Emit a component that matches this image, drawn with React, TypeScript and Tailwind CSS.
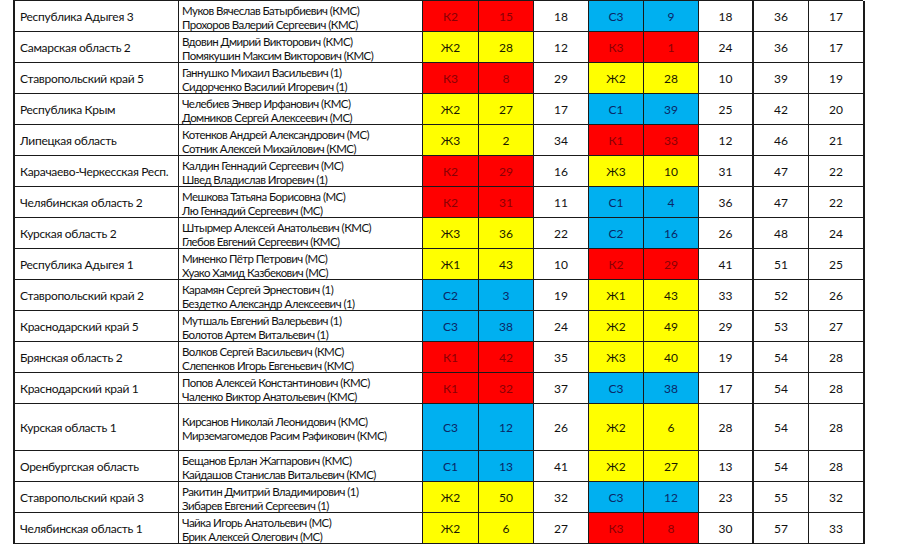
type Tone = "red" | "yellow" | "blue";

type Row = {
  region: string;
  names: [string, string];
  a: [string, string, Tone];
  aPlace: string;
  b: [string, string, Tone];
  bPlace: string;
  sum: string;
  rank: string;
  tall?: boolean;
};

const ROWS: Row[] = [
  { region: "Республика Адыгея 3", names: ["Муков Вячеслав Батырбиевич (КМС)", "Прохоров Валерий Сергеевич (КМС)"], a: ["К2", "15", "red"], aPlace: "18", b: ["С3", "9", "blue"], bPlace: "18", sum: "36", rank: "17" },
  { region: "Самарская область 2", names: ["Вдовин Дмирий Викторович (КМС)", "Помякушин Максим Викторович (КМС)"], a: ["Ж2", "28", "yellow"], aPlace: "12", b: ["К3", "1", "red"], bPlace: "24", sum: "36", rank: "17" },
  { region: "Ставропольский край 5", names: ["Ганнушко Михаил Васильевич (1)", "Сидорченко Василий Игоревич (1)"], a: ["К3", "8", "red"], aPlace: "29", b: ["Ж2", "28", "yellow"], bPlace: "10", sum: "39", rank: "19" },
  { region: "Республика Крым", names: ["Челебиев Энвер Ирфанович (КМС)", "Домников Сергей Алексеевич (МС)"], a: ["Ж2", "27", "yellow"], aPlace: "17", b: ["С1", "39", "blue"], bPlace: "25", sum: "42", rank: "20" },
  { region: "Липецкая область", names: ["Котенков Андрей Александрович (МС)", "Сотник Алексей Михайлович (КМС)"], a: ["Ж3", "2", "yellow"], aPlace: "34", b: ["К1", "33", "red"], bPlace: "12", sum: "46", rank: "21" },
  { region: "Карачаево-Черкесская Респ.", names: ["Калдин Геннадий Сергеевич (МС)", "Швед Владислав Игоревич (1)"], a: ["К2", "29", "red"], aPlace: "16", b: ["Ж3", "10", "yellow"], bPlace: "31", sum: "47", rank: "22" },
  { region: "Челябинская область 2", names: ["Мешкова Татьяна Борисовна (МС)", "Лю Геннадий Сергеевич (МС)"], a: ["К2", "31", "red"], aPlace: "11", b: ["С1", "4", "blue"], bPlace: "36", sum: "47", rank: "22" },
  { region: "Курская область 2", names: ["Штырмер Алексей Анатольевич (КМС)", "Глебов Евгений Сергеевич (КМС)"], a: ["Ж3", "36", "yellow"], aPlace: "22", b: ["С2", "16", "blue"], bPlace: "26", sum: "48", rank: "24" },
  { region: "Республика Адыгея 1", names: ["Миненко Пётр Петрович (МС)", "Хуако Хамид Казбекович (МС)"], a: ["Ж1", "43", "yellow"], aPlace: "10", b: ["К2", "29", "red"], bPlace: "41", sum: "51", rank: "25" },
  { region: "Ставропольский край 2", names: ["Карамян Сергей Эрнестович (1)", "Бездетко Александр Алексеевич (1)"], a: ["С2", "3", "blue"], aPlace: "19", b: ["Ж1", "43", "yellow"], bPlace: "33", sum: "52", rank: "26" },
  { region: "Краснодарский край 5", names: ["Мутшаль Евгений Валерьевич (1)", "Болотов Артем Витальевич (1)"], a: ["С3", "38", "blue"], aPlace: "24", b: ["Ж2", "49", "yellow"], bPlace: "29", sum: "53", rank: "27" },
  { region: "Брянская область 2", names: ["Волков Сергей Васильевич (КМС)", "Слепенков Игорь Евгеньевич (КМС)"], a: ["К1", "42", "red"], aPlace: "35", b: ["Ж3", "40", "yellow"], bPlace: "19", sum: "54", rank: "28" },
  { region: "Краснодарский край 1", names: ["Попов Алексей Константинович (КМС)", "Чаленко Виктор Анатольевич (КМС)"], a: ["К1", "32", "red"], aPlace: "37", b: ["С3", "38", "blue"], bPlace: "17", sum: "54", rank: "28" },
  { region: "Курская область 1", names: ["Кирсанов Николай Леонидович (КМС)", "Мирземагомедов Расим Рафикович (КМС)"], a: ["С3", "12", "blue"], aPlace: "26", b: ["Ж2", "6", "yellow"], bPlace: "28", sum: "54", rank: "28", tall: true },
  { region: "Оренбургская область", names: ["Бещанов Ерлан Жагпарович (КМС)", "Кайдашов Станислав Витальевич (КМС)"], a: ["С1", "13", "blue"], aPlace: "41", b: ["Ж2", "27", "yellow"], bPlace: "13", sum: "54", rank: "28" },
  { region: "Ставропольский край 3", names: ["Ракитин Дмитрий Владимирович (1)", "Зибарев Евгений Сергеевич (1)"], a: ["Ж2", "50", "yellow"], aPlace: "32", b: ["С3", "12", "blue"], bPlace: "23", sum: "55", rank: "32" },
  { region: "Челябинская область 1", names: ["Чайка Игорь Анатольевич (МС)", "Брик Алексей Олегович (МС)"], a: ["Ж2", "6", "yellow"], aPlace: "27", b: ["К3", "8", "red"], bPlace: "30", sum: "57", rank: "33" },
];

const TONE: Record<Tone, string> = {
  red: "bg-[#ff0000] text-[#8a0005]",
  yellow: "bg-[#ffff00] text-[#1a1a00]",
  blue: "bg-[#00b0f0] text-[#0b2766]",
};

const cell = "border-r border-b border-[#1a1a1a] flex items-center";

function Num({ value, extra = "" }: { value: string; extra?: string }) {
  return <div className={`${cell} pt-[2px] justify-center text-[#111] ${extra}`}>{value}</div>;
}

export default function App() {
  return (
    <div className="h-[545px] w-[900px] overflow-hidden bg-white font-['Lato','Liberation_Sans',sans-serif] text-[12px] text-[#111]">
      <div className="ml-[13px] grid w-[850px] grid-cols-[164px_244px_56px_55px_55px_55px_55px_55px_55px_56px] border-t border-l-2 border-[#1a1a1a]">
        {ROWS.map((r) => {
          const h = r.tall ? "h-[47px]" : "h-[31px]";
          return (
            <div key={r.region} className="contents">
              <div className={`${cell} ${h} pt-[2px] pl-[5px] tracking-[-0.3px]`}>{r.region}</div>
              <div className={`${cell} ${h} flex-col !items-start justify-center pt-[4px] pl-[3px] text-[11.5px] leading-[14px] tracking-[-0.55px]`}>
                <span>{r.names[0]}</span>
                <span>{r.names[1]}</span>
              </div>
              <div className={`${cell} ${h} pt-[2px] justify-center ${TONE[r.a[2]]}`}>{r.a[0]}</div>
              <div className={`${cell} ${h} pt-[2px] justify-center ${TONE[r.a[2]]}`}>{r.a[1]}</div>
              <Num value={r.aPlace} extra={h} />
              <div className={`${cell} ${h} pt-[2px] justify-center ${TONE[r.b[2]]}`}>{r.b[0]}</div>
              <div className={`${cell} ${h} pt-[2px] justify-center ${TONE[r.b[2]]}`}>{r.b[1]}</div>
              <Num value={r.bPlace} extra={`${h} border-r-2`} />
              <Num value={r.sum} extra={h} />
              <Num value={r.rank} extra={`${h} border-r-2`} />
            </div>
          );
        })}
      </div>
    </div>
  );
}
